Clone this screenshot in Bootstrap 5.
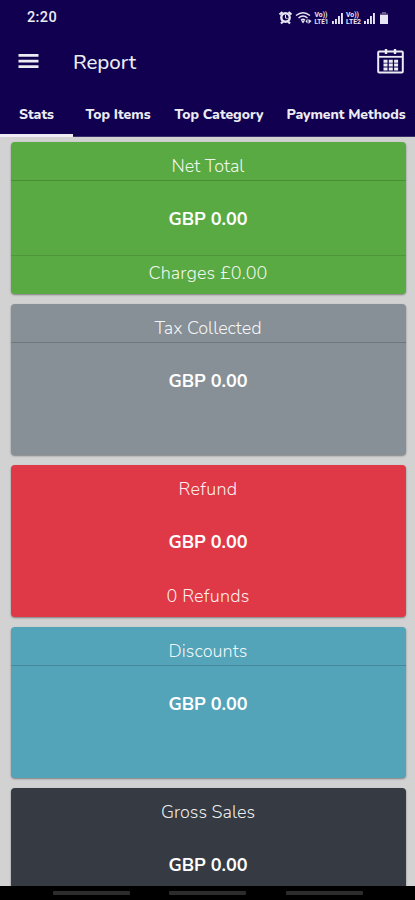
<!DOCTYPE html>
<html lang="en">
<head>
<meta charset="utf-8">
<meta name="viewport" content="width=device-width, initial-scale=1">
<title>Report</title>
<link rel="stylesheet" href="https://cdn.jsdelivr.net/npm/bootstrap@5.3.0/dist/css/bootstrap.min.css">
<style>
body{font-family:Nunito,"Open Sans","Noto Sans",sans-serif;background:#d2d2d2;height:900px;overflow:hidden}
.app-head{background:#10004f;color:#ececf4;height:137px;border-bottom:1px solid #39306a}
.status-row{height:35px;padding:0 25px 0 27px}
.clock{font-family:Roboto,sans-serif;font-size:14.5px;font-weight:500}
.title-row{height:54px;padding:0 11px 0 18px}
.page-title{font-size:20.5px;font-weight:500;line-height:1;margin-left:34px}
.tab-row{height:47px;font-size:14px;font-weight:800;white-space:nowrap}
.tab-row .nav-link{color:#ececf4;padding:0;line-height:51px;height:48px}
.tab-stats{width:73px;text-align:center;border-bottom:3px solid #f0ecf4!important}
.tab-row .tab-items{margin-left:12.5px;width:64px}
.tab-row .tab-category{margin-left:25px;width:88px}
.tab-row .tab-payment{margin-left:24px}
.cards{padding:5px 9.5px 0 10.5px;gap:10px;height:749px;overflow:hidden}
.stat{height:151.6px;flex:none;border:0;border-radius:4px;color:#fff;box-shadow:0 1px 2px rgba(0,0,0,.4);text-align:center}
.stat .card-header,.stat .card-footer{flex:none;background:none;height:39px;padding:0;line-height:49px;font-size:18px;font-weight:300;border-color:rgba(0,0,0,.17);color:rgba(255,255,255,.92)}
.stat .card-footer{height:38.6px;line-height:35px;border-top:1px solid rgba(0,0,0,.12)}
.stat .card-body{flex:none;height:74px;padding:0;line-height:77px;font-size:18px;font-weight:700}
.stat.plain .card-header,.stat.plain .card-footer{border-color:transparent}
.c-green{background:#5aaa43}.c-gray{background:#879096}.c-red{background:#df3947}.c-teal{background:#53a4b9}.c-dark{background:#363a42}
.sys-nav{height:14px;background:#000;padding:5px 52.5px 0 53px}
.sys-nav span{width:77px;height:4px;background:#2c2c2c;border-radius:1px}
.t{display:inline-block;white-space:nowrap}
</style>
</head>
<body class="d-flex flex-column">
<header class="app-head flex-shrink-0">
  <div class="status-row d-flex align-items-center justify-content-between">
    <span class="clock t" data-w="30">2:20</span>
    <svg width="112" height="16" viewBox="0 0 112 16" fill="#e8e6f2">
      <!-- alarm -->
      <circle cx="7.500" cy="7.500" r="4.200" fill="none" stroke="#e8e6f2" stroke-width="2.400"/><path d="M1.500 4.500 4.500 2M10.500 2l3 2.500M3 13.500l2-2m7 2-2-2" stroke="#e8e6f2" stroke-width="2.200"/><path d="M7.500 5v3l2 .5" stroke="#e8e6f2" fill="none"/>
      <!-- wifi -->
      <g fill="none" stroke="#e8e6f2" stroke-width="1.400"><path d="M18 5.500q7-5.500 14 0M20.500 8q4.500-4 9 0M23 10.300q2-2 4 0"/></g><path d="M23 10.500h4l-2 3zM27.500 11.500l2-3v5zM30.500 9l3 2-3 3z"/>
      <!-- carrier labels -->
      <g font-family="Roboto,sans-serif" font-weight="700" font-size="7"><text x="36.500" y="7.300" textLength="13" lengthAdjust="spacingAndGlyphs">Vo))</text><text x="36.500" y="14" textLength="14" lengthAdjust="spacingAndGlyphs">LTE1</text><text x="68" y="7.300" textLength="13" lengthAdjust="spacingAndGlyphs">Vo))</text><text x="68" y="14" textLength="15" lengthAdjust="spacingAndGlyphs">LTE2</text></g>
      <path d="M54 11h1.900v3H54zM57 9h1.900v5H57zM60 6h1.900v8H60zM63 3h1.900v11H63zM86 11h1.900v3H86zM89 9h1.900v5H89zM92 6h1.900v8H92zM95 3h1.900v11H95z"/>
      <path d="M102 5h8v9h-8z"/><path d="M102 3.500h8v1.500h-8zM104 2h4v2h-4z" opacity=".4"/>
    </svg>
  </div>
  <div class="title-row d-flex align-items-center">
    <svg width="21" height="16" viewBox="0 0 21 16" fill="#ececf4"><path d="M.5 0h20v2.700H.5zM.5 5.700h20v2.700H.5zM.5 11.200h20v2.700H.5z"/></svg>
    <h1 class="page-title mb-0"><span class="t" data-w="63">Report</span></h1>
    <svg class="ms-auto" width="27" height="26" viewBox="0 0 27 26" fill="none" stroke="#ececf4"><rect x="1.200" y="2.500" width="24.600" height="21" rx="1" stroke-width="2"/><path d="M1 7.800h25" stroke-width="1.800"/><path d="M9 0v5M18 0v5" stroke-width="2.400"/><path d="M6.500 12.200h4m1.300 0h4m1.300 0h4M6.500 16.100h4m1.300 0h4m1.300 0h4M6.500 20h4m1.300 0h4m1.300 0h4" stroke-width="3"/></svg>
  </div>
  <nav class="tab-row nav flex-nowrap">
    <a class="nav-link tab-stats"><span class="t" data-w="35">Stats</span></a>
    <a class="nav-link tab-items"><span class="t" data-w="65">Top Items</span></a>
    <a class="nav-link tab-category"><span class="t" data-w="89">Top Category</span></a>
    <a class="nav-link tab-payment"><span class="t" data-w="119">Payment Methods</span></a>
  </nav>
</header>
<main class="cards d-flex flex-column">
  <section class="card stat c-green"><div class="card-header"><span class="t" data-w="73">Net Total</span></div><div class="card-body"><span class="t" data-w="79">GBP 0.00</span></div><div class="card-footer"><span class="t" data-w="119">Charges £0.00</span></div></section>
  <section class="card stat c-gray"><div class="card-header"><span class="t" data-w="107">Tax Collected</span></div><div class="card-body"><span class="t" data-w="79">GBP 0.00</span></div></section>
  <section class="card stat plain c-red"><div class="card-header"><span class="t" data-w="59">Refund</span></div><div class="card-body"><span class="t" data-w="79">GBP 0.00</span></div><div class="card-footer"><span class="t" data-w="83">0 Refunds</span></div></section>
  <section class="card stat c-teal"><div class="card-header"><span class="t" data-w="79">Discounts</span></div><div class="card-body"><span class="t" data-w="79">GBP 0.00</span></div></section>
  <section class="card stat plain c-dark"><div class="card-header"><span class="t" data-w="94">Gross Sales</span></div><div class="card-body"><span class="t" data-w="79">GBP 0.00</span></div></section>
</main>
<footer class="sys-nav d-flex justify-content-between flex-shrink-0"><span></span><span></span><span></span></footer>
<script src="https://cdn.jsdelivr.net/npm/bootstrap@5.3.0/dist/js/bootstrap.bundle.min.js"></script>
<script>
// Fit each label to its design width by adjusting tracking.
document.querySelectorAll('.t').forEach(function (el) {
  el.style.letterSpacing = '0px';
  var gap = (el.dataset.w - el.getBoundingClientRect().width) / el.textContent.length;
  el.style.letterSpacing = gap + 'px';
});
</script>
</body>
</html>
